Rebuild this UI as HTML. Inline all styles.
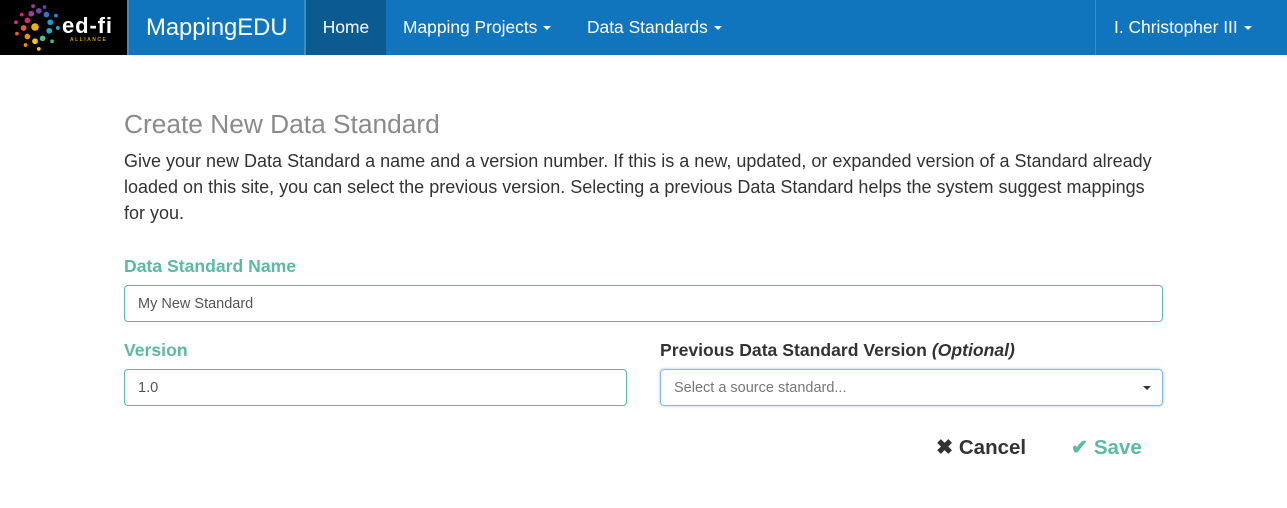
<!DOCTYPE html>
<html><head><style>
*{box-sizing:border-box;margin:0;padding:0}
body{width:1287px;height:508px;background:#fff;font-family:"Liberation Sans",Arial,sans-serif;color:#333;position:relative;overflow:hidden}
.nav{position:absolute;left:0;top:0;width:1287px;height:55px;background:#1075bd}
.logo{position:absolute;left:0;top:0;width:127px;height:55px;background:#000}
.sep{position:absolute;top:0;width:2px;height:55px;background:#3a8dc8}
.nt{position:absolute;top:0;height:55px;line-height:55px;color:#fff;font-size:17.4px}
.home{background:#0c5a92;left:306px;width:80px;text-align:center}
.caret{display:inline-block;width:0;height:0;border-left:4px solid transparent;border-right:4px solid transparent;border-top:4px solid #fff;vertical-align:middle;margin-left:6px}
h2{position:absolute;left:124px;top:109px;font-size:26.3px;font-weight:normal;color:#8a8a8a}
p.d{position:absolute;left:124px;top:148px;width:1040px;font-size:18px;line-height:26px;color:#333}
label{position:absolute;font-size:17.6px;font-weight:bold}
.g{color:#5bb9a5}
.in{position:absolute;height:37px;border:1px solid #5bb9a5;border-radius:4px;font-size:14.5px;color:#555;padding-left:13px;line-height:37px}
.sel{border:1px solid #8ab4f0;box-shadow:0 0 3px #aac8f5;color:#777}
.btn{position:absolute;top:436px;font-size:20.5px;font-weight:bold;line-height:24px}
</style></head><body>
<div class="nav">
<div class="logo"><svg width="127" height="55">
<g transform="translate(35,27) scale(0.95) translate(-30,-27)">
<circle cx="30" cy="27" r="4" fill="#f0b400"/>
<circle cx="22" cy="20" r="3" fill="#e2207a"/><circle cx="26" cy="13" r="3" fill="#a03ca0"/><circle cx="34" cy="10" r="3" fill="#7a3fa8"/><circle cx="42" cy="14" r="3" fill="#3d6fc8"/><circle cx="46" cy="22" r="3" fill="#1aa0d8"/><circle cx="45" cy="31" r="3" fill="#20b0c0"/><circle cx="38" cy="39" r="3" fill="#4bbf8a"/><circle cx="30" cy="42" r="3" fill="#f5c800"/><circle cx="22" cy="37" r="3" fill="#f08c1e"/><circle cx="18" cy="28" r="3" fill="#f05a28"/>
<circle cx="16" cy="14" r="2" fill="#e2207a"/><circle cx="28" cy="5" r="2" fill="#a03ca0"/><circle cx="40" cy="6" r="2" fill="#6040b0"/><circle cx="52" cy="15" r="2" fill="#2a8ad0"/><circle cx="54" cy="28" r="2" fill="#20b0c0"/><circle cx="48" cy="42" r="2" fill="#40b890"/><circle cx="34" cy="50" r="2" fill="#f5c800"/><circle cx="20" cy="46" r="2" fill="#f08c1e"/><circle cx="11" cy="34" r="2" fill="#f05a28"/><circle cx="10" cy="22" r="2" fill="#e0306a"/>
</g>
<text x="62" y="33" fill="#fff" font-family="Liberation Sans" font-weight="bold" font-size="22" textLength="50">ed-fi</text>
<text x="70" y="41" fill="#c8a000" font-family="Liberation Sans" font-weight="bold" font-size="5" letter-spacing="1.5">ALLIANCE</text>
</svg></div>
<div class="sep" style="left:127px"></div>
<div class="nt" style="left:146px;font-size:23.8px">MappingEDU</div>
<div class="sep" style="left:304px"></div>
<div class="nt home">Home</div>
<div class="nt" style="left:403px">Mapping Projects<span class="caret"></span></div>
<div class="nt" style="left:587px">Data Standards<span class="caret"></span></div>
<div class="sep" style="left:1095px;width:1px"></div>
<div class="nt" style="left:1114px">I. Christopher III<span class="caret"></span></div>
</div>
<h2>Create New Data Standard</h2>
<p class="d">Give your new Data Standard a name and a version number. If this is a new, updated, or expanded version of a Standard already loaded on this site, you can select the previous version. Selecting a previous Data Standard helps the system suggest mappings for you.</p>
<label class="g" style="left:124px;top:256px">Data Standard Name</label>
<div class="in" style="left:124px;top:285px;width:1039px">My New Standard</div>
<label class="g" style="left:124px;top:340px">Version</label>
<div class="in" style="left:124px;top:369px;width:503px">1.0</div>
<label style="left:660px;top:340px;color:#333">Previous Data Standard Version <i>(Optional)</i></label>
<div class="in sel" style="left:660px;top:369px;width:503px">Select a source standard...<span style="position:absolute;right:11px;top:16px;border-left:4px solid transparent;border-right:4px solid transparent;border-top:4px solid #333"></span></div>
<div class="btn" style="left:936px;color:#333">✖ Cancel</div>
<div class="btn g" style="left:1071px">✔ Save</div>
</body></html>
